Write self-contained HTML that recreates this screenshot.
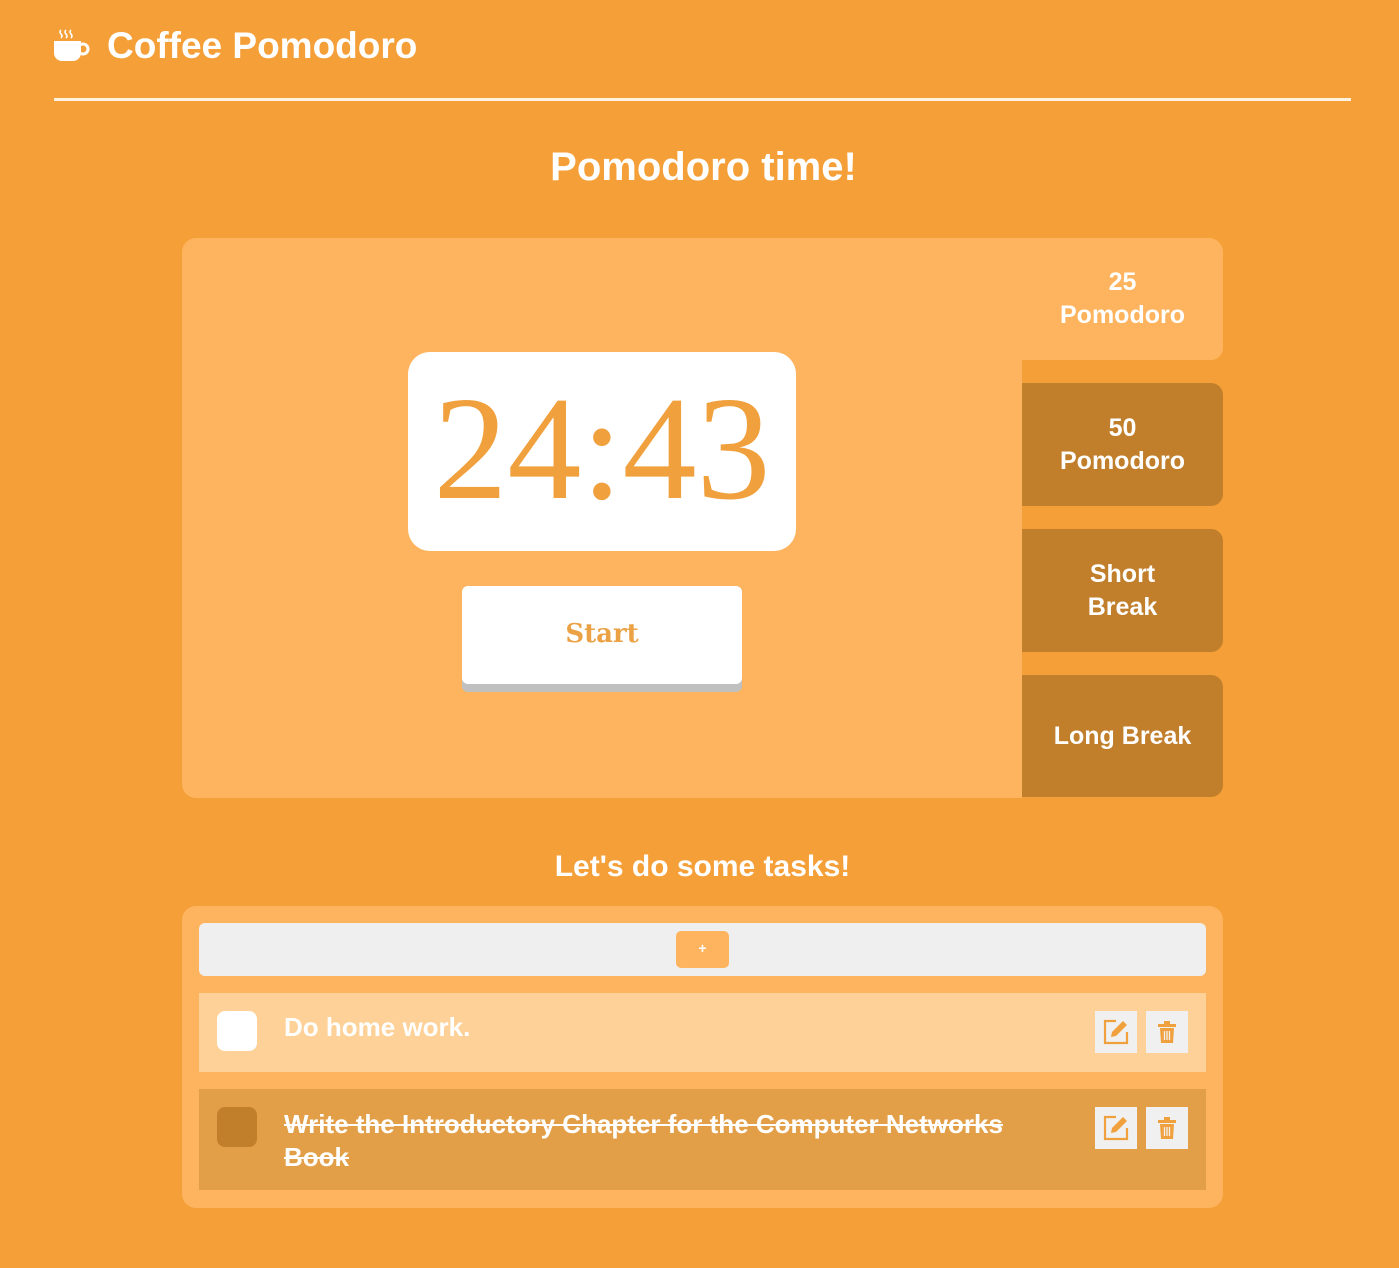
<!DOCTYPE html>
<html><head><meta charset="utf-8"><style>
*{margin:0;padding:0;box-sizing:border-box}
body{width:1399px;height:1268px;background:#F59F38;font-family:"Liberation Sans",sans-serif;position:relative;overflow:hidden;color:#fff}
.a{position:absolute}
.tab{position:absolute;left:1022px;width:201px;background:#C17F2C;border-radius:0 12px 12px 0;color:#fff;font-weight:bold;font-size:25px;text-align:center;display:flex;align-items:center;justify-content:center;line-height:33px}
.ib{position:absolute;width:42px;height:42px;background:#F0F0F0;display:flex;align-items:center;justify-content:center}
</style></head><body>
<svg class="a" style="left:53px;top:28px" width="38" height="36" viewBox="0 0 38 36">
<path d="M8 2q-2 2 0 4t0 4M13 2q-2 2 0 4t0 4M18 2q-2 2 0 4t0 4" stroke="#fff" stroke-width="1.6" fill="none"/>
<path d="M1 13h27v12a8 8 0 0 1-8 8H9a8 8 0 0 1-8-8z" fill="#fff"/>
<circle cx="30" cy="21" r="5" fill="none" stroke="#fff" stroke-width="3"/>
</svg>
<div class="a" style="left:107px;top:25px;font-size:37px;font-weight:bold">Coffee Pomodoro</div>
<div class="a" style="left:54px;top:98px;width:1297px;height:3px;background:#FFF3DF"></div>
<div class="a" style="left:0;width:1399px;top:145px;text-align:center;font-size:40px;font-weight:bold;padding-left:8px">Pomodoro time!</div>
<div class="a" style="left:182px;top:238px;width:840px;height:560px;background:#FEB45E;border-radius:14px 0 0 14px"></div>
<div class="tab" style="top:238px;height:122px;background:#FEB45E;border-radius:0 14px 12px 0">25<br>Pomodoro</div>
<div class="tab" style="top:383px;height:123px">50<br>Pomodoro</div>
<div class="tab" style="top:529px;height:123px">Short<br>Break</div>
<div class="tab" style="top:675px;height:122px">Long Break</div>
<div class="a" style="left:408px;top:352px;width:388px;height:199px;background:#fff;border-radius:22px"></div>
<div class="a" style="left:408px;top:366px;width:388px;text-align:center;font-family:'Liberation Serif',serif;font-size:148px;color:#F0A03C;line-height:166px">24:43</div>
<div class="a" style="left:462px;top:586px;width:280px;height:106px;background:#C0C0C0;border-radius:6px"></div>
<div class="a" style="left:462px;top:586px;width:280px;height:98px;background:#fff;border-radius:6px;text-align:center;line-height:96px;font-family:'DejaVu Serif',serif;font-weight:bold;font-size:26px;color:#EBA245">Start</div>
<div class="a" style="left:0;width:1399px;top:850px;text-align:center;font-size:30px;font-weight:bold;padding-left:6px">Let's do some tasks!</div>
<div class="a" style="left:182px;top:906px;width:1041px;height:302px;background:#FEB45E;border-radius:14px"></div>
<div class="a" style="left:199px;top:923px;width:1007px;height:53px;background:#EFEFEF;border-radius:6px"></div>
<div class="a" style="left:676px;top:931px;width:53px;height:37px;background:#FEB45E;border-radius:5px;text-align:center;line-height:35px;font-size:14px;font-weight:bold">+</div>
<div class="a" style="left:199px;top:993px;width:1007px;height:79px;background:#FDD197"></div>
<div class="a" style="left:217px;top:1011px;width:40px;height:40px;background:#fff;border-radius:8px"></div>
<div class="a" style="left:284px;top:1012px;font-size:26px;font-weight:bold">Do home work.</div>
<div class="a" style="left:199px;top:1089px;width:1007px;height:101px;background:#E29F48"></div>
<div class="a" style="left:217px;top:1107px;width:40px;height:40px;background:#C17F2C;border-radius:8px"></div>
<div class="a" style="left:284px;top:1108px;font-size:26px;font-weight:bold;text-decoration:line-through;line-height:33px;width:740px">Write the Introductory Chapter for the Computer Networks Book</div>
<div class="ib" style="left:1095px;top:1011px"><svg width="28" height="28" viewBox="0 0 28 28"><path d="M14 3H3v22h22V14" fill="none" stroke="#F0A03C" stroke-width="2.2"/><path d="M9 19l1-5L21 3l4 4L14 18z" fill="#F0A03C"/></svg></div>
<div class="ib" style="left:1146px;top:1011px"><svg width="22" height="24" viewBox="0 0 22 24"><path d="M2 4h18v3H2zM8 1h6v3H8zM4 8h14l-1 15H5z" fill="#F0A03C"/><path d="M8.5 11v9M11 11v9M13.5 11v9" stroke="#F0F0F0" stroke-width="1.3"/></svg></div>
<div class="ib" style="left:1095px;top:1107px"><svg width="28" height="28" viewBox="0 0 28 28"><path d="M14 3H3v22h22V14" fill="none" stroke="#F0A03C" stroke-width="2.2"/><path d="M9 19l1-5L21 3l4 4L14 18z" fill="#F0A03C"/></svg></div>
<div class="ib" style="left:1146px;top:1107px"><svg width="22" height="24" viewBox="0 0 22 24"><path d="M2 4h18v3H2zM8 1h6v3H8zM4 8h14l-1 15H5z" fill="#F0A03C"/><path d="M8.5 11v9M11 11v9M13.5 11v9" stroke="#F0F0F0" stroke-width="1.3"/></svg></div>
</body></html>
